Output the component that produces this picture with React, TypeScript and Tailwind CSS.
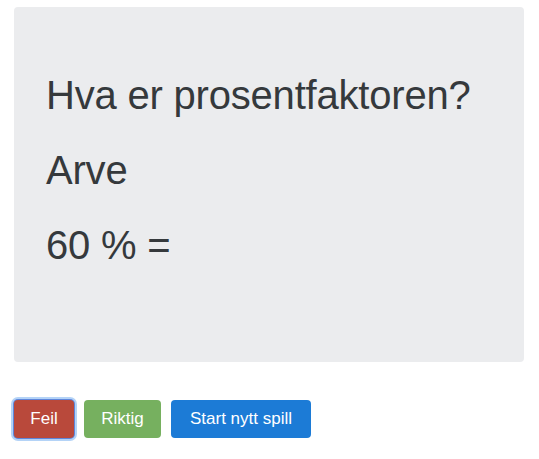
import React from "react";

export default function App() {
  return (
    <div className="min-h-screen bg-white px-[14px] pt-[7px]" style={{ fontFamily: '"Liberation Sans", Arial, sans-serif' }}>
      <div className="w-[510px] rounded-[4px] bg-[#ebecee] pl-8 pr-8 pt-16 pb-[93px] text-[#35393c]">
        <div className="flex flex-col gap-[27px]">
          <h1 className="text-[40px] leading-[48px] font-normal tracking-[-0.2px]">Hva er prosentfaktoren?</h1>
          <h1 className="text-[40px] leading-[48px] font-normal tracking-[-0.2px]">Arve</h1>
          <h1 className="text-[40px] leading-[48px] font-normal tracking-[-0.2px]">60 % =</h1>
        </div>
      </div>
      <div className="mt-[38px] flex gap-[10px]">
        <button className="h-[38px] w-[60px] rounded-[4px] bg-[#b9493b] text-[17px] text-white shadow-[0_0_0_1px_#5f86da,0_0_0_3px_#b4d3f7]">
          Feil
        </button>
        <button className="h-[38px] w-[77px] rounded-[4px] bg-[#76b05f] text-[17px] text-white">
          Riktig
        </button>
        <button className="h-[38px] w-[140px] rounded-[4px] bg-[#1c7bd6] text-[17px] text-white">
          Start nytt spill
        </button>
      </div>
    </div>
  );
}
